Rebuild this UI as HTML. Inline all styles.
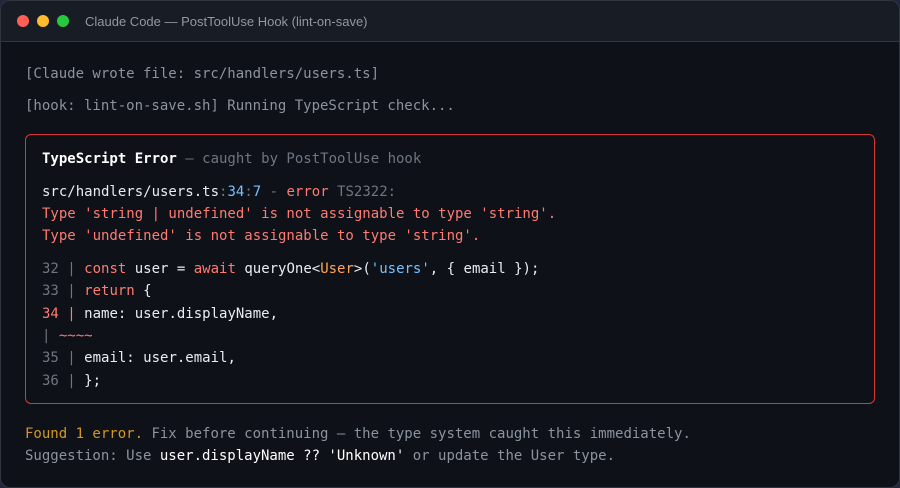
<!DOCTYPE html>
<html><head><meta charset="utf-8"><style>
*{margin:0;padding:0;box-sizing:border-box}
html,body{width:900px;height:488px;background:#23263a;overflow:hidden}
.win{position:absolute;left:0;top:0;width:900px;height:488px;border:1px solid #30363d;border-radius:10px;background:#0e1118;overflow:hidden}
.tb{position:absolute;left:0;top:0;right:0;height:41px;background:#181c24;border-bottom:1px solid #30363d}
.dot{position:absolute;top:14px;width:12px;height:12px;border-radius:50%}
.title{position:absolute;left:84px;top:13px;font:13px "Liberation Sans",sans-serif;color:#9198a1}
.l{position:absolute;height:22px;line-height:22px;font:14px "DejaVu Sans Mono","Liberation Mono",monospace;white-space:pre;color:#e6edf3}
.g{color:#8b949e}.n{color:#6e7681}.r{color:#ff7b72}.b{color:#79c0ff}.o{color:#ffa657}.y{color:#d29922}.w{color:#fff}
.box{position:absolute;left:24px;top:133px;width:850px;height:270px;border:1px solid #da3633;border-radius:6px}
</style></head><body>
<div class="win">
<div class="tb">
<div class="dot" style="left:16px;background:#ff5f57"></div>
<div class="dot" style="left:36px;background:#febc2e"></div>
<div class="dot" style="left:56px;background:#28c840"></div>
<div class="title">Claude Code — PostToolUse Hook (lint-on-save)</div>
</div>
<div class="l g" style="left:24px;top:65px">[Claude wrote file: src/handlers/users.ts]</div>
<div class="l g" style="left:24px;top:97px">[hook: lint-on-save.sh] Running TypeScript check...</div>
<div class="box"></div>
<div class="l" style="left:41px;top:150px"><b class="w">TypeScript Error</b><span class="n"> — caught by PostToolUse hook</span></div>
<div class="l" style="left:41px;top:183px">src/handlers/users.ts<span class="n">:</span><span class="b">34</span><span class="n">:</span><span class="b">7</span><span class="n"> - </span><span class="r">error</span><span class="n"> TS2322:</span></div>
<div class="l r" style="left:41px;top:205px">Type 'string | undefined' is not assignable to type 'string'.</div>
<div class="l r" style="left:41px;top:227px">Type 'undefined' is not assignable to type 'string'.</div>
<div class="l" style="left:41px;top:260px"><span class="n">32 | </span><span class="r">const</span> user = <span class="r">await</span> queryOne&lt;<span class="o">User</span>&gt;(<span class="b">'users'</span>, { email });</div>
<div class="l" style="left:41px;top:282px"><span class="n">33 | </span><span class="r">return</span> {</div>
<div class="l" style="left:41px;top:305px"><span class="r">34 | </span>name: user.displayName,</div>
<div class="l" style="left:41px;top:327px"><span class="n">| </span><span class="r">~~~~</span></div>
<div class="l" style="left:41px;top:349px"><span class="n">35 | </span>email: user.email,</div>
<div class="l" style="left:41px;top:372px"><span class="n">36 | </span>};</div>
<div class="l g" style="left:24px;top:425px"><span class="y">Found 1 error.</span> Fix before continuing — the type system caught this immediately.</div>
<div class="l g" style="left:24px;top:447px">Suggestion: Use <span class="w">user.displayName ?? 'Unknown'</span> or update the User type.</div>
</div>
</body></html>
